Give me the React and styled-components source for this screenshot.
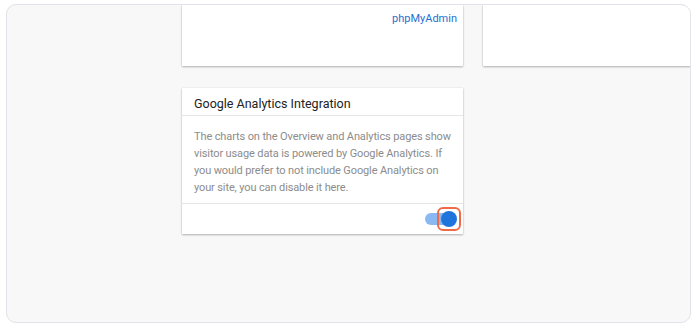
import React from 'react';
import styled, { createGlobalStyle } from 'styled-components';

const GlobalStyle = createGlobalStyle`
    html, body {
        margin: 0;
        padding: 0;
        background: #ffffff;
        font-family: Roboto, "Liberation Sans", sans-serif;
    }
`;

const Page = styled.div`
    width: 696px;
    height: 328px;
    padding: 4px 5px 5px 6px;
    box-sizing: border-box;
`;

const Frame = styled.div`
    height: 100%;
    box-sizing: border-box;
    border: 1px solid #e2e2e8;
    border-radius: 10px;
    background: #f8f8f8;
    overflow: hidden;
`;

const Grid = styled.div`
    display: grid;
    grid-template-columns: 281px 281px 281px;
    column-gap: 20px;
    row-gap: 22px;
    padding-left: 175px;
`;

const Card = styled.div`
    background: #ffffff;
    box-shadow: 0 1px 2px rgba(0, 0, 0, 0.28), 0 0 1px rgba(0, 0, 0, 0.12);
    height: ${p => p.height || 'auto'};
    display: flex;
    flex-direction: column;
`;

const LinkRow = styled.div`
    display: flex;
    justify-content: flex-end;
    padding: 7px 6px 0 0;
`;

const Link = styled.a`
    color: #1f6fd1;
    font-size: 11px;
    text-decoration: none;
`;

const Header = styled.div`
    height: 28px;
    display: flex;
    align-items: flex-end;
    padding: 0 12px 4px;
    box-sizing: border-box;
    border-bottom: 1px solid #e6e6e6;
    font-size: 12.5px;
    color: #222;
`;

const Body = styled.p`
    margin: 0;
    padding: 12px 4px 7px 12px;
    font-size: 11px;
    letter-spacing: -0.12px;
    line-height: 17px;
    color: #8c8c8c;
    border-bottom: 1px solid #e6e6e6;
`;

const Footer = styled.div`
    height: 30px;
    display: flex;
    align-items: center;
    justify-content: flex-end;
    padding-right: 4px;
`;

const Switch = styled.div`
    position: relative;
    width: 26px;
    height: 12px;
    border-radius: 6px;
    background: #8ab8f0;
    margin-right: 8px;
`;

const Thumb = styled.div`
    position: absolute;
    right: -6px;
    top: -2px;
    width: 16px;
    height: 16px;
    border-radius: 50%;
    background: #1f74dc;
`;

const Highlight = styled.div`
    position: absolute;
    right: -10px;
    top: -6px;
    width: 20px;
    height: 20px;
    border: 2px solid #ee6a48;
    border-radius: 6px;
`;

const App = () => {
    return (
        <Page>
            <GlobalStyle />
            <Frame>
                <Grid>
                    <Card height='61px'>
                        <LinkRow>
                            <Link href='#'>phpMyAdmin</Link>
                        </LinkRow>
                    </Card>
                    <Card height='61px' />
                    <div />
                    <Card>
                        <Header>Google Analytics Integration</Header>
                        <Body>
                            The charts on the Overview and Analytics pages show visitor usage data is powered by Google Analytics. If you would prefer to not include Google Analytics on your site, you can disable it here.
                        </Body>
                        <Footer>
                            <Switch>
                                <Thumb />
                                <Highlight />
                            </Switch>
                        </Footer>
                    </Card>
                </Grid>
            </Frame>
        </Page>
    )
}

export default App;
